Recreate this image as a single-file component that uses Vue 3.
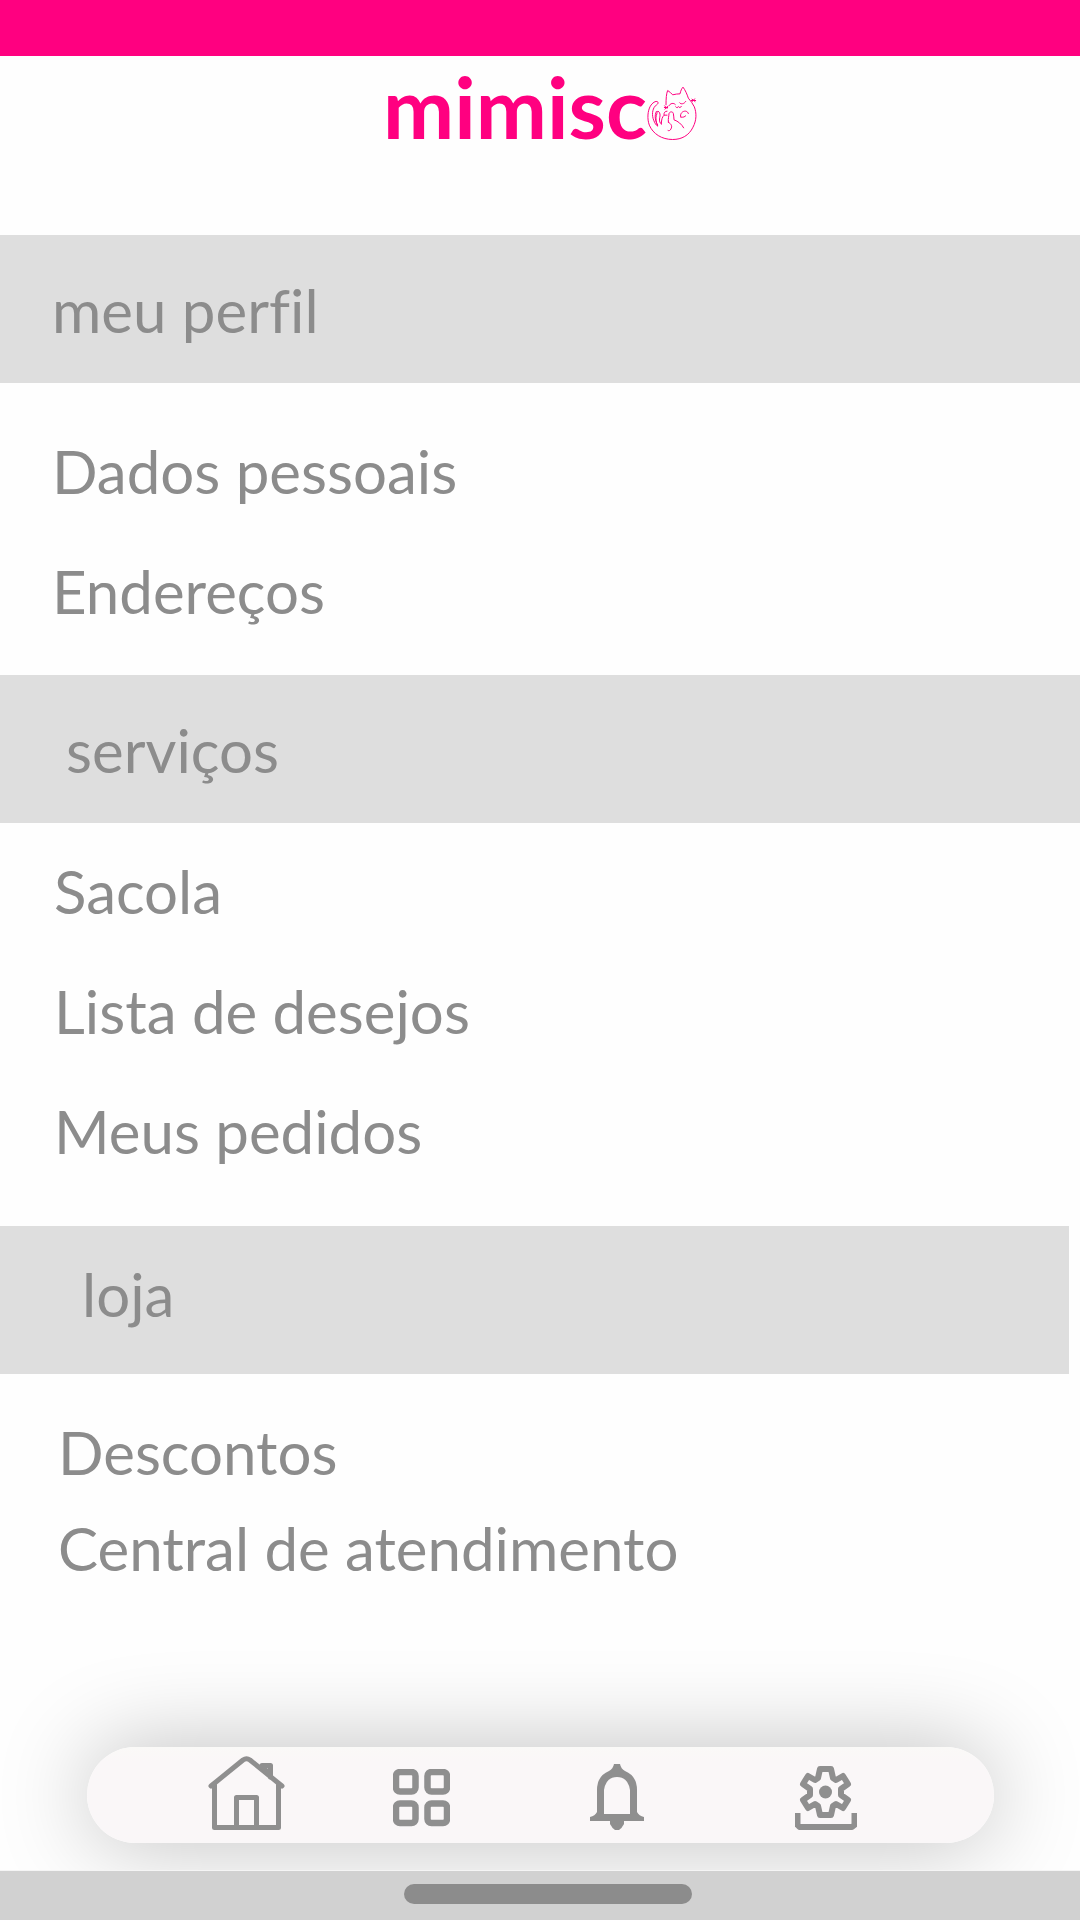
<script setup>
const sections = [
  { id: 'perfil', title: 'meu perfil', items: ['Dados pessoais', 'Endereços'] },
  { id: 'servicos', title: 'serviços', items: ['Sacola', 'Lista de desejos', 'Meus pedidos'] },
  { id: 'loja', title: 'loja', items: ['Descontos', 'Central de atendimento'] },
]
</script>

<template>
  <div class="screen">
    <div class="status-bar"></div>

    <header class="header">
      <a class="logo" href="#" aria-label="mimisco">
        <span class="logo-text">mimisc</span>
        <svg class="logo-cat" viewBox="44 32 150 164" fill="none" stroke="#ff0080" stroke-width="3" stroke-linecap="round" stroke-linejoin="round" aria-hidden="true">
          <path d="M101 88 C101 70 102 54 106 45 C112 49 117 53 121 58 C128 56 136 55 143 55 C145 46 148 39 152 35 C159 44 164 56 168 68 C175 76 181 84 186 94 C193 113 193 134 182 155 C170 180 148 192 121 192 C88 192 62 175 51 149 C44 130 46 106 54 92 C60 82 70 75 76 79 C80 84 73 88 68 92 C60 102 58 119 64 134 C67 142 71 149 76 152 C72 143 69 128 72 120 C76 111 72 108 77 107 C84 110 84 120 82 127 C80 137 83 143 87 146" />
          <path d="M72 108 C66 119 68 137 76 148 M87 145 C87 132 90 123 96 119 L104 119 M95 119 C94 111 98 107 104 107" />
          <path d="M110 91 C113 83 124 81 129 87 M142 82 C146 88 156 85 160 78 M130 94 C133 98 137 97 138 93 C140 97 145 97 147 93" />
          <path d="M108 140 C107 128 110 121 110 114 C113 107 122 108 123 114 C125 121 124 128 125 133 C137 137 148 146 154 157 M108 140 C118 146 120 153 116 160 C114 165 110 167 107 165 M145 125 C142 114 151 106 160 107 C165 108 167 111 168 114 M147 125 C153 126 157 124 160 121" />
          <path d="M97 91 L104 99 M98 101 L106 92 M96 96 L106 96 M179 71 L188 78 M187 70 L180 78 M177 75 L190 75" />
        </svg>
      </a>
    </header>

    <main>
      <section v-for="section in sections" :key="section.id" :class="['section', section.id]">
        <h2 class="section-title">{{ section.title }}</h2>
        <ul class="links">
          <li v-for="item in section.items" :key="item">
            <a href="#">{{ item }}</a>
          </li>
        </ul>
      </section>
    </main>

    <footer class="footer">
      <nav class="nav" aria-label="Principal">
        <button type="button" aria-label="Início">
          <svg width="77" height="74" viewBox="0 0 77 74" fill="none" stroke="currentColor" stroke-width="5" stroke-linecap="round" stroke-linejoin="round">
            <path d="M3 30 L35 4 Q38.500 1.500 42 4 L74 30" />
            <path d="M6.500 29 V71.500 H70.500 V29 M28.500 71 V41.500 H48.500 V71 M54 9.500 H62.500 V21 M54 11 L62 18" />
          </svg>
        </button>
        <button type="button" aria-label="Categorias">
          <svg width="57" height="61" viewBox="0 0 57 61" fill="none" stroke="currentColor" stroke-width="6.500">
            <rect x="3" y="3" width="19.500" height="19.500" rx="4" />
            <rect x="34.500" y="3" width="19.500" height="19.500" rx="4" />
            <rect x="3" y="34.500" width="19.500" height="19.500" rx="4" />
            <rect x="34.500" y="34.500" width="19.500" height="19.500" rx="4" />
          </svg>
        </button>
        <button type="button" aria-label="Notificações">
          <svg width="54" height="66" viewBox="0 0 54 66" fill="currentColor">
            <path fill-rule="evenodd" d="M24 0 H30 Q31 5 35 7 Q47 12 47 26 V48 Q49 52 54 53 V57 H0 V53 Q5 52 7 48 V26 Q7 12 19 7 Q23 5 24 0 Z M14 50 H40 V26 Q38 13 27 13 Q16 13 14 26 Z" />
            <path d="M20 56 H34 V60 Q32 64 29 66 H25 Q22 64 20 60 Z" />
          </svg>
        </button>
        <button type="button" aria-label="Configurações">
          <svg width="62" height="64" viewBox="0 0 62 64" fill="none" stroke="currentColor" stroke-width="6" stroke-linejoin="round">
            <path d="M25 3 H36 L38 12 L41 14 L48 10 L53 18 L46 23 V29 L53 34 L48 42 L41 38 L38 40 L36 49 H25 L23 40 L20 38 L13 42 L8 34 L15 29 V23 L8 18 L13 10 L20 14 L23 12 Z" />
            <circle cx="30.500" cy="26" r="6.500" fill="currentColor" stroke="none" />
            <path d="M2.500 47 V59 L4.500 61 H57 L59.500 59 V47" />
          </svg>
        </button>
      </nav>
      <div class="system-bar"><span class="handle"></span></div>
    </footer>
  </div>
</template>

<style>
body {
  margin: 0;
  background: #fefefe;
}
</style>

<style scoped>
.screen {
  display: flex;
  flex-direction: column;
  min-height: 100vh;
  color: #8c8c8c;
  font-family: Lato, "Open Sans", sans-serif;
  font-variant-ligatures: none;
}
.status-bar {
  height: 56px;
  background: #ff0080;
}
.header {
  display: flex;
  justify-content: center;
  height: 179px;
}
.logo {
  display: flex;
  align-items: flex-start;
  height: 100px;
  color: #ff0080;
  text-decoration: none;
}
.logo-text {
  font-size: 85px;
  font-weight: 700;
  line-height: 100px;
}
.logo-cat {
  width: 50px;
  height: 55px;
  margin-top: 30px;
}
.section-title {
  display: flex;
  align-items: center;
  box-sizing: border-box;
  height: 148px;
  margin: 0;
  padding: 2px 0 0 52px;
  background: #dedede;
  font-size: 60px;
  font-weight: 400;
}
.links {
  margin: 0;
  padding: 28px 52px 24px;
  list-style: none;
  font-size: 60px;
  line-height: 120px;
}
.links a {
  color: inherit;
  text-decoration: none;
}
.servicos .section-title {
  padding-left: 66px;
}
.servicos .links {
  padding: 8px 54px 35px;
}
.loja .section-title {
  margin-right: 11px;
  padding: 0 0 12px 82px;
}
.loja .links {
  padding: 30px 58px 28px;
  line-height: 96px;
}
.footer {
  margin-top: auto;
  overflow: hidden;
  padding-top: 120px;
}
.nav {
  display: grid;
  grid-template-columns: 170fr 180fr 211fr 208fr;
  align-items: end;
  height: 96px;
  margin: 0 86px 27px 87px;
  padding: 0 64px 13px 75px;
  box-sizing: border-box;
  border-radius: 48px;
  background: linear-gradient(#faf9f7, #faf7f8 14px);
  box-shadow: 0 0 92px rgba(0, 0, 0, 0.25);
}
.nav button {
  display: flex;
  justify-content: center;
  padding: 0;
  border: 0;
  background: none;
  color: #8f8f8f;
}
.system-bar {
  position: relative;
  display: flex;
  justify-content: center;
  align-items: center;
  box-sizing: border-box;
  height: 50px;
  padding-bottom: 4px;
  border-top: 1px solid #f5f5f5;
  background: #d1d1d1;
}
.handle {
  width: 288px;
  height: 20px;
  margin-left: 16px;
  border-radius: 10px;
  background: #8c8c8c;
}
</style>
